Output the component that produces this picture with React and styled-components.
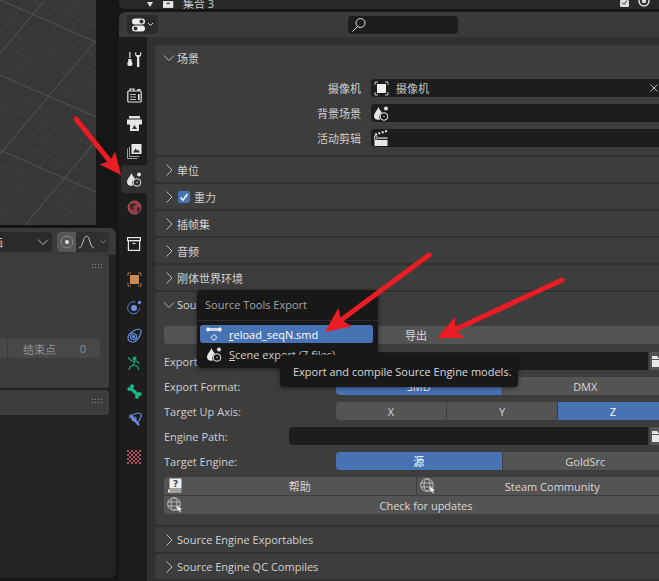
import React from 'react';
import styled, { createGlobalStyle } from 'styled-components';

const ui = '"Open Sans", "Noto Sans CJK SC", sans-serif';

const GlobalStyle = createGlobalStyle`
  html, body { margin: 0; padding: 0; background: #161616; overflow: hidden; }
  body { font-family: ${ui}; font-size: 11px; color: #d0d0d0; }
`;

const Page = styled.div`
  position: relative;
  width: 659px;
  height: 581px;
  display: flex;
  overflow: hidden;
  background: #161616;
`;

const LeftColumn = styled.div`
  width: 119px;
  flex: none;
  display: flex;
  flex-direction: column;
  gap: 3px;
  padding-bottom: 3px;
  box-sizing: border-box;
`;

const Viewport = styled.div`
  width: 96px;
  height: 225px;
  background: #373737;
  overflow: hidden;
`;

const Timeline = styled.div`
  width: 116px;
  flex: 1;
  background: #232323;
  border-radius: 0 7px 5px 0;
  display: flex;
  flex-direction: column;
  overflow: hidden;
`;

const TimelineHeader = styled.div`
  height: 27px;
  flex: none;
  background: #3a3a3a;
  display: flex;
  align-items: center;
`;

const Dropdown = styled.div`
  width: 52px;
  height: 20px;
  background: #2a2a2a;
  border-radius: 0 4px 4px 0;
  display: flex;
  align-items: center;
  justify-content: space-between;
  padding-right: 3px;
  box-sizing: border-box;
  margin-right: 5px;
  color: #cfcfcf;
  overflow: hidden;
`;

const ClippedName = styled.span`
  margin-left: -8px;
`;

const ToggleGroup = styled.div`
  display: flex;
  width: 52px;
  height: 20px;
`;

const ToggleOn = styled.div`
  width: 19px;
  background: #565656;
  border-radius: 4px 0 0 4px;
  display: flex;
  align-items: center;
  justify-content: center;
`;

const ToggleOff = styled.div`
  flex: 1;
  background: #2f2f2f;
  border-radius: 0 4px 4px 0;
  display: flex;
  align-items: center;
  justify-content: space-around;
`;

const SubPanel = styled.div`
  width: 109px;
  height: ${(p) => p.$h}px;
  flex: none;
  background: #3d3d3d;
  border-radius: 0 4px 4px 0;
  margin-bottom: 2px;
  box-sizing: border-box;
  display: flex;
  flex-direction: column;
  padding: 8px 7px 0 0;
`;

const Grip = styled.div`
  align-self: flex-end;
  width: 12px;
  height: 6px;
  margin-right: -1px;
  background-image: radial-gradient(#8f8f8f 0.8px, transparent 0.9px);
  background-size: 3px 3px;
`;

const RangeRow = styled.div`
  height: 19px;
  width: 100px;
  margin-top: 70px;
  background: #484848;
  border-radius: 0 4px 4px 0;
  display: flex;
  color: #8f8f8f;
`;

const RangeStub = styled.div`
  width: 7px;
  border-right: 1px solid #3a3a3a;
`;

const RangeValue = styled.div`
  flex: 1;
  display: flex;
  justify-content: space-between;
  align-items: center;
  padding: 0 14px 0 15px;
`;

const Properties = styled.div`
  width: 560px;
  flex: none;
  display: flex;
  flex-direction: column;
`;

const Outliner = styled.div`
  height: 9px;
  flex: none;
  background: #282828;
  border-bottom-left-radius: 6px;
  display: flex;
  align-items: center;
  overflow: hidden;
  margin-bottom: 3px;
  padding-left: 28px;
  color: #cfcfcf;
`;

const OutlinerPin = styled.span`
  width: 16px;
  display: flex;
`;

const OutlinerName = styled.span`
  margin-left: 8px;
  margin-top: -3px;
`;

const OutlinerMarks = styled.div`
  position: absolute;
  left: 620px;
  top: 0;
  display: flex;
  gap: 8px;
`;

const PropHeader = styled.div`
  height: 25px;
  background: #3a3a3a;
  border-top-left-radius: 6px;
  display: flex;
  align-items: center;
  flex: none;
`;

const EditorButton = styled.div`
  width: 31px;
  height: 19px;
  margin-left: 8px;
  background: #2b2b2b;
  border-radius: 4px;
  display: flex;
  align-items: center;
  justify-content: center;
`;

const SearchBox = styled.div`
  width: 110px;
  height: 18px;
  margin-left: 190px;
  background: #1d1d1d;
  border-radius: 4px;
  display: flex;
  align-items: center;
  padding-left: 3px;
  box-sizing: border-box;
`;

const PropBody = styled.div`
  flex: 1;
  display: flex;
  min-height: 0;
`;

const Tabs = styled.div`
  width: 28px;
  flex: none;
  background: #1d1d1d;
  display: flex;
  flex-direction: column;
  padding-top: 8px;
`;

const Tab = styled.div`
  height: 28px;
  flex: none;
  margin-bottom: ${(p) => p.$gap || 0}px;
  display: flex;
  align-items: center;
  justify-content: center;
  background: ${(p) => (p.$active ? '#303030' : 'transparent')};
  border-radius: 4px 0 0 4px;
  padding-left: ${(p) => (p.$active ? 0 : 2)}px;
  margin-left: ${(p) => (p.$active ? 2 : 0)}px;
`;

const Content = styled.div`
  flex: 1;
  background: #303030;
  padding: 8px 8px 0;
  display: flex;
  flex-direction: column;
  gap: 2px;
  overflow: hidden;
`;

const Panel = styled.div`
  width: 522px;
  background: #3d3d3d;
  border-radius: 4px;
  flex: none;
  padding-bottom: ${(p) => p.$pad || 0}px;
`;

const PanelHead = styled.div`
  height: 25px;
  display: flex;
  align-items: center;
  padding-left: 8px;
  gap: 2px;
  color: #d2d2d2;
`;

const Check = styled.div`
  width: 12px;
  height: 12px;
  margin: 0 2px 0 1px;
  background: #4772b3;
  border-radius: 2px;
  display: flex;
  align-items: center;
  justify-content: center;
`;

const SceneRows = styled.div`
  display: flex;
  flex-direction: column;
  gap: 7px;
  padding: 9px 9px 0;
`;

const LabelRow = styled.div`
  display: grid;
  grid-template-columns: 197px 1fr;
  column-gap: 10px;
  align-items: center;
  height: 18px;
`;

const RightLabel = styled.div`
  text-align: right;
  color: #cfcfcf;
`;

const Field = styled.div`
  height: 18px;
  background: #1d1d1d;
  border-radius: 4px;
  display: flex;
  align-items: center;
  padding: 0 3px;
  gap: 7px;
  color: #c4c4c4;
`;

const FieldClose = styled.span`
  margin-left: auto;
  margin-right: 7px;
  display: flex;
`;

const SourceBody = styled.div`
  padding: 9px 9px 0;
  display: flex;
  flex-direction: column;
`;

const ExportBar = styled.div`
  height: 18px;
  background: #545454;
  border-radius: 4px;
  display: flex;
  align-items: center;
  justify-content: center;
  margin-bottom: 8px;
  color: #dcdcdc;
`;

const PropRow = styled.div`
  display: grid;
  grid-template-columns: ${(p) => p.$cols};
  align-items: center;
  height: 18px;
  margin-bottom: 7px;
  color: #cfcfcf;
`;

const Segments = styled.div`
  display: flex;
  height: 18px;
  gap: 1px;
`;

const Segment = styled.div`
  flex: 1;
  display: flex;
  align-items: center;
  justify-content: center;
  background: ${(p) => (p.$on ? '#4772b3' : '#545454')};
  color: ${(p) => (p.$on ? '#ffffff' : '#d8d8d8')};
  &:first-child { border-radius: 4px 0 0 4px; }
  &:last-child { border-radius: 0 4px 4px 0; }
`;

const PathField = styled.div`
  height: 18px;
  background: #1d1d1d;
  border-radius: 4px 0 0 4px;
`;

const FileButton = styled.div`
  height: 18px;
  margin-left: 2px;
  background: #545454;
  border-radius: 0 4px 4px 0;
  display: flex;
  align-items: center;
  padding-left: 1px;
`;

const LinkGrid = styled.div`
  display: grid;
  grid-template-columns: 1fr 1fr;
  gap: 1px;
`;

const LinkButton = styled.div`
  position: relative;
  grid-column: ${(p) => (p.$wide ? '1 / 3' : 'auto')};
  height: 18px;
  background: #545454;
  display: flex;
  align-items: center;
  justify-content: center;
  padding-left: 20px;
  color: #d8d8d8;
  border-radius: ${(p) => p.$radius};
`;

const LinkIcon = styled.span`
  position: absolute;
  left: 3px;
  top: 1px;
  display: flex;
`;

const Popup = styled.div`
  position: absolute;
  left: 197px;
  top: 290px;
  width: 181px;
  height: 78px;
  background: #181818;
  border-radius: 5px;
  box-shadow: 0 1px 5px rgba(0, 0, 0, 0.5);
  overflow: hidden;
`;

const PopupTitle = styled.div`
  height: 30px;
  line-height: 30px;
  padding-left: 8px;
  color: #a6a6a6;
  border-bottom: 1px solid #2c2c2c;
`;

const PopupItem = styled.div`
  height: 18px;
  margin: ${(p) => (p.$on ? '4px' : '2px')} 5px 0 3px;
  padding-left: 6px;
  border-radius: 3px;
  display: flex;
  align-items: center;
  gap: 7px;
  background: ${(p) => (p.$on ? '#4772b3' : 'transparent')};
  color: ${(p) => (p.$on ? '#ffffff' : '#d0d0d0')};
`;

const PopupIcon = styled.span`
  width: 16px;
  display: flex;
  justify-content: center;
`;

const Accel = styled.span`
  text-decoration: underline;
`;

const Tooltip = styled.div`
  position: absolute;
  left: 280px;
  top: 355px;
  width: 238px;
  height: 32px;
  background: #181818;
  border-radius: 4px;
  box-shadow: 0 1px 4px rgba(0, 0, 0, 0.5);
  display: flex;
  align-items: center;
  padding-left: 13px;
  box-sizing: border-box;
  color: #d8d8d8;
  white-space: nowrap;
`;

const ArrowLayer = styled.svg`
  position: absolute;
  inset: 0;
  pointer-events: none;
`;

const W = '#e6e6e6';

const GridLines = () => {
  const lines = [];
  for (let i = -10; i < 26; i++) {
    const major = i % 5 === 0;
    lines.push(<line key={'a' + i} x1={0} y1={i * 15} x2={96} y2={i * 15 + 42} stroke={major ? '#525252' : '#434343'} strokeWidth={major ? 1.1 : 0.8} />);
    lines.push(<line key={'b' + i} x1={i * 17 - 60} y1={225} x2={i * 17 + 130} y2={0} stroke={major ? '#505050' : '#414141'} strokeWidth={major ? 1.1 : 0.8} />);
  }
  return <svg width="96" height="225">{lines}</svg>;
};

const Chevron = ({ open }) => (
  <svg width="12" height="12" viewBox="0 0 12 12" fill="none" stroke="#b8b8b8" strokeWidth="1">
    {open ? <path d="M1 3.500l5 5 5-5" /> : <path d="M3.500 .5l5.500 5.500-5.500 5.500" />}
  </svg>
);

const EditorIcon = () => (
  <svg width="24" height="14" viewBox="0 0 24 14">
    <rect x="1" y="0.500" width="13" height="6" rx="3" fill="#eee" />
    <circle cx="10.500" cy="3.500" r="2" fill="#333" />
    <rect x="1" y="7.500" width="13" height="6" rx="3" fill="#eee" />
    <circle cx="4.500" cy="10.500" r="2" fill="#333" />
    <path d="M17 5l2.500 2.500L22 5" fill="none" stroke="#ddd" />
  </svg>
);

const SearchIcon = () => (
  <svg width="16" height="16" viewBox="0 0 16 16" fill="none" stroke="#e0e0e0" strokeWidth="1">
    <circle cx="9.500" cy="6" r="4.500" />
    <path d="M6.500 9.500L1.500 14.500" />
  </svg>
);

const ToolIcon = () => (
  <svg width="15" height="15" viewBox="0 0 15 15" fill={W}>
    <rect x="2.300" y="0" width="1.200" height="6" />
    <path d="M1.300 7h3.200v2l1 2.500a2.600 2.600 0 1 1-5.200 0l1-2.500z" />
    <path d="M8 .5c0 3 .8 4 2 4.600V15h2.300V5.100c1.200-.6 2-1.600 2-4.600l-1.300 0v2.600h-3.700V.5z" />
  </svg>
);

const RenderIcon = () => (
  <svg width="15" height="15" viewBox="0 0 15 15" fill="none" stroke={W} strokeWidth="1.200">
    <rect x="0.800" y="3" width="13.400" height="11" rx="1" />
    <path d="M3 3V1h4v2M11 3V1.500h2V3" />
    <path d="M3 6.500h6M3 9h6M3 11.500h6" strokeWidth="1" opacity="0.8" />
    <rect x="11" y="6" width="1.600" height="6" fill={W} stroke="none" />
  </svg>
);

const OutputIcon = () => (
  <svg width="15" height="15" viewBox="0 0 15 15">
    <rect x="2" y="0" width="11" height="2.500" fill={W} />
    <rect x="0" y="3.500" width="15" height="5" fill={W} />
    <rect x="3" y="6" width="9" height="9" fill={W} />
    <path d="M5 13l2.500-4 2.500 4z" fill="#333" />
  </svg>
);

const ViewLayerIcon = () => (
  <svg width="15" height="15" viewBox="0 0 15 15" fill="none" stroke={W}>
    <path d="M.5 4.500v10h10M2.500 2.500v10h10" strokeWidth="0.900" opacity="0.7" />
    <rect x="4.500" y="0" width="10" height="10" fill={W} stroke="none" />
    <path d="M6 8.500l2.500-4 1.500 2 1-1 2 3z" fill="#333" stroke="none" />
  </svg>
);

const SceneIcon = () => (
  <svg width="15" height="15" viewBox="0 0 15 15">
    <path d="M4.500 1C3.500 4 0 7 0 10a4.500 3.700 0 0 0 4.500 3.700c.6 0 1-.1 1.500-.3A5 5 0 0 1 8 6.500C6.500 5 5.200 3 4.500 1z" fill={W} />
    <circle cx="12" cy="2.500" r="2" fill={W} />
    <circle cx="10" cy="10.500" r="3.800" fill="none" stroke={W} strokeWidth="1" />
    <circle cx="10" cy="10.500" r="0.800" fill="#bbb" />
  </svg>
);

const WorldIcon = () => (
  <svg width="15" height="15" viewBox="0 0 15 15">
    <circle cx="7.500" cy="7.500" r="6.500" fill="#8f3e45" stroke="#b0545b" />
    <path d="M3 3l3 1 2-1 1 2-3 2 1 2-2 1-2-3zM10 8l3-1 .5 2-2.500 4-1-2z" fill="#2a1a1c" opacity="0.75" />
  </svg>
);

const CollectionIcon = ({ small }) => (
  <svg width={small ? 12 : 14} height={small ? 7 : 14} viewBox={small ? '0 0 14 8' : '0 0 14 14'}>
    {small ? (
      <g>
        <rect x="0" y="0" width="12" height="8" fill="#e6e6e6" />
        <rect x="4" y="2" width="4" height="1.500" fill="#333" />
      </g>
    ) : (
      <g fill="none" stroke={W} strokeWidth="1.200">
        <rect x="0.600" y="0.600" width="12.800" height="3" />
        <rect x="1.400" y="3.600" width="11.200" height="9.800" />
        <path d="M5.500 6.500h3" />
      </g>
    )}
  </svg>
);

const ObjectIcon = () => (
  <svg width="15" height="15" viewBox="0 0 15 15" fill="none" stroke="#a8764c" strokeWidth="1">
    <path d="M1 4V1h3M11 1h3v3M14 11v3h-3M4 14H1v-3" />
    <rect x="3" y="3" width="9" height="9" fill="#c98b54" stroke="none" />
  </svg>
);

const PhysicsIcon = () => (
  <svg width="15" height="15" viewBox="0 0 15 15" fill="none">
    <path d="M12.500 8.500a6 6 0 1 1-4-6.500" stroke="#5c7fc8" strokeWidth="1" />
    <circle cx="7" cy="8" r="3" fill="#6b8fdc" />
    <circle cx="12.500" cy="2.500" r="1.700" fill="#6b8fdc" />
  </svg>
);

const ConstraintIcon = () => (
  <svg width="15" height="15" viewBox="0 0 15 15" fill="none" stroke="#6b8fdc" strokeWidth="1.200">
    <path d="M1 9.500C1 6 8 1 11.500 1c2.500 0 3 2 2.500 3.500C13 8 10 14 5.500 14 2.500 14 1 12 1 9.500z" />
    <circle cx="6.500" cy="8.500" r="3" />
    <circle cx="6.500" cy="8.500" r="1" fill="#6b8fdc" />
  </svg>
);

const ArmatureIcon = () => (
  <svg width="15" height="15" viewBox="0 0 15 15" fill="none" stroke="#19a67c" strokeWidth="1.200">
    <circle cx="7.500" cy="2.500" r="1.500" fill="#19a67c" />
    <path d="M1 1.500l3.500 3.500h5l3 2.500M7.500 5l-1 4-3.500 2-1 3M6.500 9l4 1.500 1.500 3.500" />
  </svg>
);

const BoneIcon = () => (
  <svg width="15" height="15" viewBox="0 0 15 15">
    <path d="M4 4.500L11 11" stroke="#19b98a" strokeWidth="3.200" />
    <circle cx="2.300" cy="5" r="2" fill="#19b98a" />
    <circle cx="5" cy="2.300" r="2" fill="#19b98a" />
    <circle cx="10" cy="12.700" r="2" fill="#19b98a" />
    <circle cx="12.700" cy="10" r="2" fill="#19b98a" />
  </svg>
);

const BoneConstraintIcon = () => (
  <svg width="15" height="15" viewBox="0 0 15 15" fill="none" stroke="#6b8fdc" strokeWidth="1.200">
    <path d="M2 6C3 4 8 1 11.500 1c2.500 0 3 2 2.500 3.500C13.500 7 12 9 10 11" />
    <path d="M3 3l9 10" strokeWidth="2.500" />
    <circle cx="7" cy="7" r="2" />
  </svg>
);

const TextureIcon = () => (
  <svg width="14" height="14" viewBox="0 0 14 14">
    <rect width="14" height="14" fill="#ad505c" />
    {[0, 1, 2, 3, 4, 5, 6].map((r) =>
      [0, 1, 2, 3, 4, 5, 6].map((c) =>
        (r + c) % 2 === 1 ? <rect key={r + '-' + c} x={c * 2} y={r * 2} width="2" height="2" fill="#1b1b1b" /> : null
      )
    )}
  </svg>
);

const CameraFrameIcon = () => (
  <svg width="15" height="15" viewBox="0 0 15 15" fill="none" stroke="#c8c8c8" strokeWidth="1">
    <path d="M1 4V1h3M11 1h3v3M14 11v3h-3M4 14H1v-3" />
    <rect x="3" y="3" width="9" height="9" fill="#eeeeee" stroke="none" />
  </svg>
);

const ClipIcon = () => (
  <svg width="14" height="16" viewBox="0 0 14 16">
    <path d="M1 4.500L13 1" stroke={W} strokeWidth="2" strokeDasharray="2 1.500" />
    <rect x="0.500" y="6" width="2.500" height="3" fill="none" stroke={W} strokeWidth="0.800" />
    <rect x="4" y="7.500" width="9.500" height="1.200" fill={W} />
    <rect x="0.500" y="10" width="13" height="6" fill={W} />
  </svg>
);

const CloseIcon = () => (
  <svg width="8" height="8" viewBox="0 0 8 8" stroke="#b4b4b4" fill="none">
    <path d="M.5.500l7 7M7.500.500l-7 7" />
  </svg>
);

const MeshIcon = () => (
  <svg width="16" height="15" viewBox="0 0 16 15">
    <rect x="3" y="1" width="10" height="3" fill="#ccd6ea" />
    <path d="M2 0l2.200 2.500L2 5 0 2.500zM14 0l2 2.500L14 5l-2.200-2.500z" fill="#fff" />
    <path d="M8 7.500l3 3-3 3-3-3z" fill="none" stroke="#fff" />
  </svg>
);

const FolderIcon = () => (
  <svg width="14" height="13" viewBox="0 0 14 13">
    <path d="M1 1h5l1.500 2H14v9H1z" fill="#e6e6e6" />
    <path d="M1 4h13v1H1z" fill="#545454" />
  </svg>
);

const HelpIcon = () => (
  <svg width="15" height="15" viewBox="0 0 15 15">
    <path d="M2.500 0.500h12v10h-12z" fill="#eee" />
    <path d="M1 11.500h13.500v1H2.500v1h12v1H1z" fill="#eee" />
    <text x="8.500" y="8.500" fontSize="9" fontWeight="700" fill="#444" textAnchor="middle" fontFamily="DejaVu Sans">?</text>
  </svg>
);

const UrlIcon = () => (
  <svg width="16" height="16" viewBox="0 0 16 16" fill="none" stroke="#c8c8c8" strokeWidth="0.900">
    <circle cx="7" cy="7" r="6.300" />
    <ellipse cx="7" cy="7" rx="3" ry="6.300" />
    <path d="M1 5h12M1 9h12" />
    <path d="M10 9l5 3-2 .7 1.200 2.300-1 .5-1.200-2.300-1.500 1z" fill="#eee" stroke="none" />
  </svg>
);

const Ticks = () => (
  <svg width="10" height="8" viewBox="0 0 10 8">
    <rect x="0" y="0" width="9" height="7" fill="#ddd" rx="1" />
    <path d="M2 2.500l2 2L7 .5" stroke="#333" fill="none" />
  </svg>
);

const EyeMark = () => (
  <svg width="13" height="8" viewBox="0 0 13 8" fill="none" stroke="#ddd" strokeWidth="1.500">
    <circle cx="6" cy="1" r="5" />
    <circle cx="6" cy="1" r="1.500" fill="#ddd" />
  </svg>
);

const Arrow = ({ x1, y1, x2, y2, head }) => {
  // shaft from the tail to the notch of the head, then a filled barbed head
  const dx = x2 - x1;
  const dy = y2 - y1;
  const len = Math.hypot(dx, dy);
  const ux = dx / len;
  const uy = dy / len;
  const bx = x2 - ux * head;
  const by = y2 - uy * head;
  const px = -uy * head * 0.46;
  const py = ux * head * 0.46;
  const nx = x2 - ux * head * 0.8;
  const ny = y2 - uy * head * 0.8;
  return (
    <g>
      <line x1={x1} y1={y1} x2={nx} y2={ny} stroke="#ea1c24" strokeWidth="5" strokeLinecap="round" />
      <path d={`M${x2} ${y2}L${bx + px} ${by + py}L${nx} ${ny}L${bx - px} ${by - py}Z`} fill="#ea1c24" />
    </g>
  );
};

const tabs = [
  { icon: <ToolIcon />, gap: 8 },
  { icon: <RenderIcon /> },
  { icon: <OutputIcon /> },
  { icon: <ViewLayerIcon /> },
  { icon: <SceneIcon />, active: true },
  { icon: <WorldIcon />, gap: 9 },
  { icon: <CollectionIcon />, gap: 7 },
  { icon: <ObjectIcon /> },
  { icon: <PhysicsIcon /> },
  { icon: <ConstraintIcon /> },
  { icon: <ArmatureIcon /> },
  { icon: <BoneIcon /> },
  { icon: <BoneConstraintIcon />, gap: 10 },
  { icon: <TextureIcon /> },
];

const closedPanels = ['单位', '重力', '插帧集', '音频', '刚体世界环境'];

const App = () => (
  <Page>
    <GlobalStyle />
    <LeftColumn>
      <Viewport>
        <GridLines />
      </Viewport>
      <Timeline>
        <TimelineHeader>
          <Dropdown>
            <ClippedName>画</ClippedName>
            <Chevron open />
          </Dropdown>
          <ToggleGroup>
            <ToggleOn>
              <svg width="14" height="14" viewBox="0 0 14 14">
                <circle cx="7" cy="7" r="6" fill="none" stroke="#8a8a8a" />
                <circle cx="7" cy="7" r="2" fill="#ddd" />
              </svg>
            </ToggleOn>
            <ToggleOff>
              <svg width="15" height="14" viewBox="0 0 15 14" fill="none" stroke="#bdbdbd">
                <path d="M0 13c4 0 4-12 7.500-12S11 13 15 13" />
              </svg>
              <svg width="8" height="6" viewBox="0 0 8 6" fill="none" stroke="#777">
                <path d="M1 1l3 3 3-3" />
              </svg>
            </ToggleOff>
          </ToggleGroup>
        </TimelineHeader>
        <SubPanel $h={133}>
          <Grip />
          <RangeRow>
            <RangeStub />
            <RangeValue>
              <span>结束点</span>
              <span>0</span>
            </RangeValue>
          </RangeRow>
        </SubPanel>
        <SubPanel $h={25}>
          <Grip />
        </SubPanel>
      </Timeline>
    </LeftColumn>

    <Properties>
      <Outliner>
        <OutlinerPin>
          <svg width="6" height="5" viewBox="0 0 6 5">
            <path d="M0 0h6L3 5z" fill="#ddd" />
          </svg>
        </OutlinerPin>
        <CollectionIcon small />
        <OutlinerName>集合 3</OutlinerName>
        <OutlinerMarks>
          <Ticks />
          <EyeMark />
        </OutlinerMarks>
      </Outliner>
      <PropHeader>
        <EditorButton>
          <EditorIcon />
        </EditorButton>
        <SearchBox>
          <SearchIcon />
        </SearchBox>
      </PropHeader>
      <PropBody>
        <Tabs>
          {tabs.map((t, i) => (
            <Tab key={i} $active={t.active} $gap={t.gap}>
              {t.icon}
            </Tab>
          ))}
        </Tabs>
        <Content>
          <Panel $pad={8}>
            <PanelHead>
              <Chevron open />
              <span>场景</span>
            </PanelHead>
            <SceneRows>
              <LabelRow>
                <RightLabel>摄像机</RightLabel>
                <Field>
                  <CameraFrameIcon />
                  <span>摄像机</span>
                  <FieldClose>
                    <CloseIcon />
                  </FieldClose>
                </Field>
              </LabelRow>
              <LabelRow>
                <RightLabel>背景场景</RightLabel>
                <Field>
                  <SceneIcon />
                </Field>
              </LabelRow>
              <LabelRow>
                <RightLabel>活动剪辑</RightLabel>
                <Field>
                  <ClipIcon />
                </Field>
              </LabelRow>
            </SceneRows>
          </Panel>

          {closedPanels.map((name) => (
            <Panel key={name}>
              <PanelHead>
                <Chevron />
                {name === '重力' && (
                  <Check>
                    <svg width="10" height="10" viewBox="0 0 10 10" fill="none" stroke="#fff" strokeWidth="1.500">
                      <path d="M1.500 5.500L4 8l4.500-6" />
                    </svg>
                  </Check>
                )}
                <span>{name}</span>
              </PanelHead>
            </Panel>
          ))}

          <Panel $pad={11}>
            <PanelHead>
              <Chevron open />
              <span>Source Tools</span>
            </PanelHead>
            <SourceBody>
              <ExportBar>导出</ExportBar>
              <PropRow $cols="125px 1fr 20px">
                <span>Export Path:</span>
                <PathField />
                <FileButton>
                  <FolderIcon />
                </FileButton>
              </PropRow>
              <PropRow $cols="172px 1fr">
                <span>Export Format:</span>
                <Segments>
                  <Segment $on>SMD</Segment>
                  <Segment>DMX</Segment>
                </Segments>
              </PropRow>
              <PropRow $cols="172px 1fr">
                <span>Target Up Axis:</span>
                <Segments>
                  <Segment>X</Segment>
                  <Segment>Y</Segment>
                  <Segment $on>Z</Segment>
                </Segments>
              </PropRow>
              <PropRow $cols="125px 1fr 20px">
                <span>Engine Path:</span>
                <PathField />
                <FileButton>
                  <FolderIcon />
                </FileButton>
              </PropRow>
              <PropRow $cols="172px 1fr">
                <span>Target Engine:</span>
                <Segments>
                  <Segment $on>源</Segment>
                  <Segment>GoldSrc</Segment>
                </Segments>
              </PropRow>
              <LinkGrid>
                <LinkButton $radius="4px 0 0 0">
                  <LinkIcon><HelpIcon /></LinkIcon>
                  帮助
                </LinkButton>
                <LinkButton $radius="0 4px 0 0">
                  <LinkIcon><UrlIcon /></LinkIcon>
                  Steam Community
                </LinkButton>
                <LinkButton $wide $radius="0 0 4px 4px">
                  <LinkIcon><UrlIcon /></LinkIcon>
                  Check for updates
                </LinkButton>
              </LinkGrid>
            </SourceBody>
          </Panel>

          <Panel>
            <PanelHead>
              <Chevron />
              <span>Source Engine Exportables</span>
            </PanelHead>
          </Panel>
          <Panel>
            <PanelHead>
              <Chevron />
              <span>Source Engine QC Compiles</span>
            </PanelHead>
          </Panel>
        </Content>
      </PropBody>
    </Properties>

    <Popup>
      <PopupTitle>Source Tools Export</PopupTitle>
      <PopupItem $on>
        <PopupIcon><MeshIcon /></PopupIcon>
        <span><Accel>r</Accel>eload_seqN.smd</span>
      </PopupItem>
      <PopupItem>
        <PopupIcon><SceneIcon /></PopupIcon>
        <span><Accel>S</Accel>cene export (7 files)</span>
      </PopupItem>
    </Popup>
    <Tooltip>Export and compile Source Engine models.</Tooltip>

    <ArrowLayer width="659" height="581">
      <Arrow x1={76} y1={119} x2={121} y2={175} head={22} />
      <Arrow x1={429} y1={255} x2={325} y2={332} head={25} />
      <Arrow x1={562} y1={280} x2={437} y2={338} head={25} />
    </ArrowLayer>
  </Page>
);

export default App;
